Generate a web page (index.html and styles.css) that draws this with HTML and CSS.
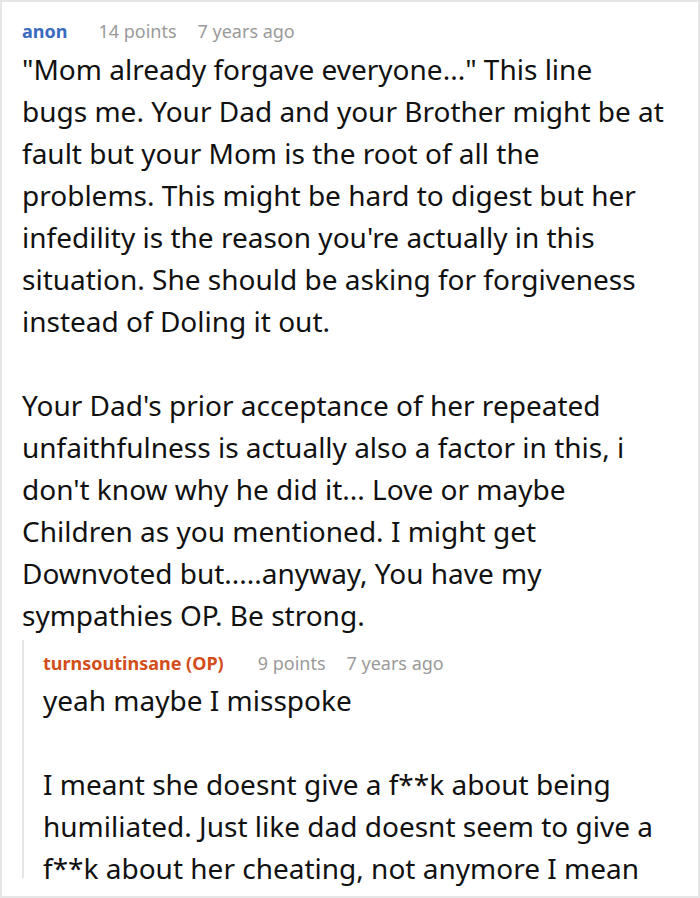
FILE: index.html
```html
<!DOCTYPE html>
<html>
<head>
<meta charset="utf-8">
<link rel="stylesheet" href="styles.css">
</head>
<body>
<div class="frame">
  <div class="comment">
    <div class="meta">
      <span class="author">anon</span>
      <span class="info">14 points</span>
      <span class="info">7 years ago</span>
    </div>
    <div class="body main">
      <p>"Mom already forgave everyone..." This line bugs me. Your Dad and your Brother might be at fault but your Mom is the root of all the problems. This might be hard to digest but her infedility is the reason you're actually in this situation. She should be asking for forgiveness instead of Doling it out.</p>
      <p>Your Dad's prior acceptance of her repeated unfaithfulness is actually also a factor in this, i don't know why he did it... Love or maybe Children as you mentioned. I might get Downvoted but.....anyway, You have my sympathies OP. Be strong.</p>
    </div>
    <div class="reply">
      <div class="meta">
        <span class="author op">turnsoutinsane (OP)</span>
        <span class="info">9 points</span>
        <span class="info">7 years ago</span>
      </div>
      <div class="body">
        <p>yeah maybe I misspoke</p>
        <p>I meant she doesnt give a f**k about being humiliated. Just like dad doesnt seem to give a f**k about her cheating, not anymore I mean</p>
      </div>
    </div>
  </div>
</div>
</body>
</html>
```

FILE: styles.css
```css
html, body {
  margin: 0;
  padding: 0;
  background: #ffffff;
}
.frame {
  box-sizing: border-box;
  width: 700px;
  height: 898px;
  border: 2px solid #e6e6e6;
  padding: 17px 20px 0 20px;
  overflow: hidden;
  font-family: "Noto Sans", "Open Sans", sans-serif;
  color: #111111;
}
.meta {
  display: flex;
  font-size: 18px;
  line-height: 24px;
  height: 24px;
  white-space: nowrap;
}
.author {
  font-weight: 700;
  color: #3a6bbf;
  margin-right: 31px;
}
.author.op {
  color: #d24e1a;
  margin-right: 34px;
}
.info {
  color: #9a9a9a;
  margin-right: 21px;
}
.body {
  font-size: 28px;
  line-height: 42px;
  margin-top: 5px;
}
.body.main {
  padding-right: 14px;
}
.body p {
  margin: 0 0 42px 0;
}
.body p:last-child {
  margin-bottom: 0;
}
.reply {
  margin-top: 4px;
  border-left: 2px solid #e6e6e6;
  padding: 11px 0 0 19px;
  height: 238px;
  box-sizing: border-box;
}
.reply .body {
  margin-top: 4px;
}
```
